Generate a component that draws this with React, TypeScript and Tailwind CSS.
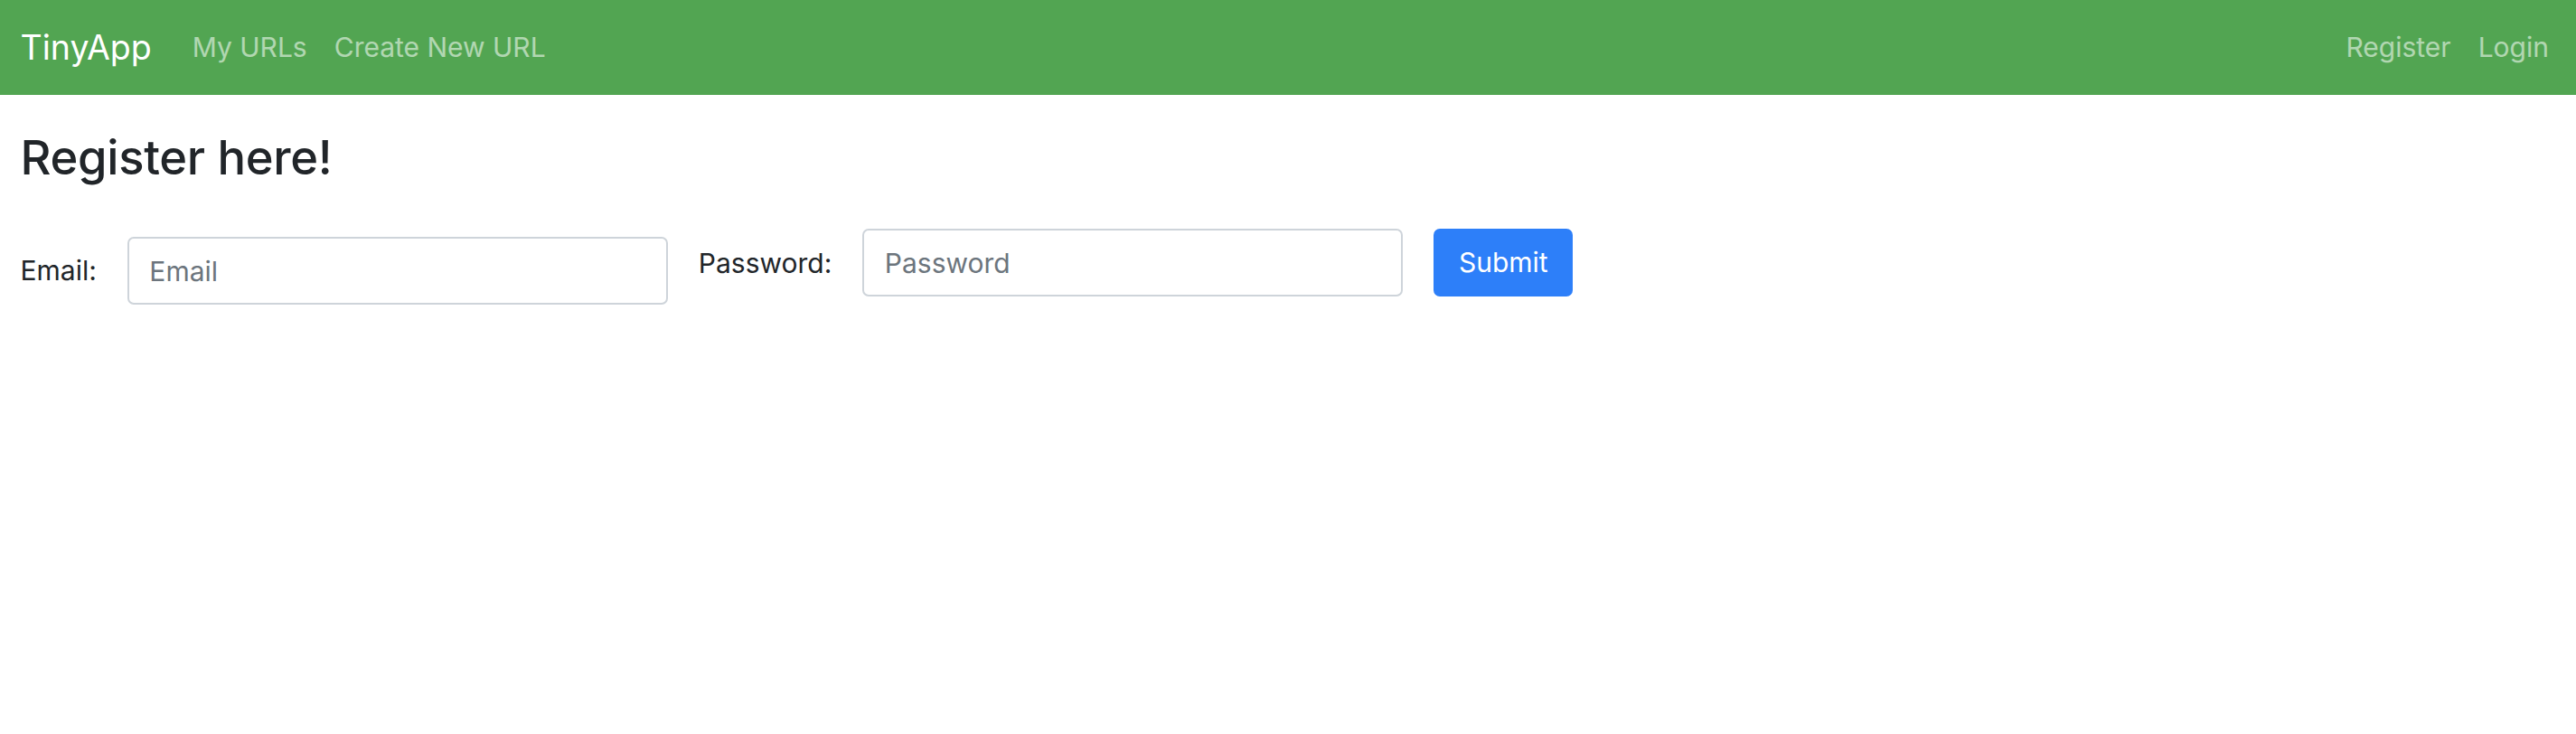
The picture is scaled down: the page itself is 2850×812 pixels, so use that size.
import React from "react";

export default function App() {
  const font = { fontFamily: "Inter, 'Noto Sans', sans-serif" };
  return (
    <div className="min-h-[812px] w-full bg-white text-[#212529]" style={font}>
      <nav className="flex h-[105px] items-center bg-[#52a552] pl-[22.5px] pr-[15px]">
        <span className="mr-[30px] text-[37.5px] leading-[56px] text-white">TinyApp</span>
        <a className="px-[15px] text-[30px] leading-[45px] text-white/55">My URLs</a>
        <a className="px-[15px] text-[30px] leading-[45px] text-white/55">Create New URL</a>
        <div className="ml-auto flex">
          <a className="px-[15px] text-[30px] leading-[45px] text-white/55">Register</a>
          <a className="px-[15px] text-[30px] leading-[45px] text-white/55">Login</a>
        </div>
      </nav>
      <main className="px-[22.5px]">
        <h3 className="mt-[38px] mb-[15px] text-[52.5px] font-medium leading-[1.2] tracking-[-0.3px]">Register here!</h3>
        <form className="mt-[47px] flex items-start gap-[34px]">
          <div className="mt-[9px] flex items-start gap-[34px]">
            <label className="mt-[15px] text-[30px] leading-[45px]">Email:</label>
            <input
              type="email"
              placeholder="Email"
              className="h-[75px] w-[598px] rounded-[7px] border-2 border-[#ced4da] px-[22.5px] text-[30px] text-[#212529] placeholder:text-[#6c757d] outline-none"
            />
          </div>
          <div className="flex items-start gap-[34px]">
            <label className="mt-[16px] text-[30px] leading-[45px]">Password:</label>
            <input
              type="password"
              placeholder="Password"
              className="h-[75px] w-[598px] rounded-[7px] border-2 border-[#ced4da] px-[22.5px] text-[30px] text-[#212529] placeholder:text-[#6c757d] outline-none"
            />
          </div>
          <button
            type="button"
            className="h-[75px] w-[154px] rounded-[7px] bg-[#2d7ff9] text-[30px] text-white"
          >
            Submit
          </button>
        </form>
      </main>
    </div>
  );
}
